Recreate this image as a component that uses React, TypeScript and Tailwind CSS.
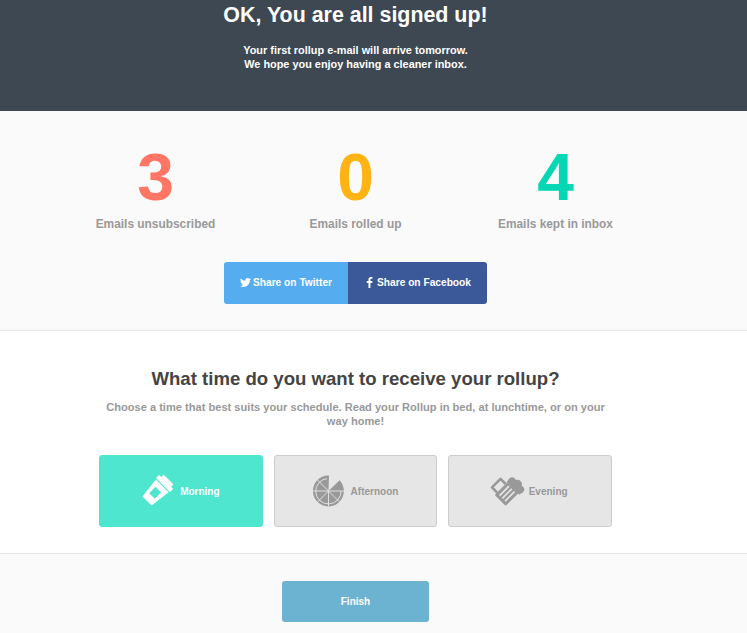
const font = "font-['Liberation_Sans',Arial,sans-serif]";

function Cup() {
  return (
    <svg width="32" height="32" viewBox="0 0 32 32" fill="#fff" className="shrink-0 overflow-visible">
      <g transform="translate(-2.500 1.500) rotate(45 16 16)">
        <rect x="9" y="-2.500" width="14" height="3.500" rx="1" />
        <rect x="6" y="1" width="20" height="4.500" rx="0.500" />
        <path fillRule="evenodd" d="M7 6.500h18L22.500 28h-13L7 6.500ZM12 12v9h8v-9h-8Z" />
      </g>
    </svg>
  );
}

function Pizza() {
  return (
    <svg width="31" height="32" viewBox="0 0 30 31" fill="#999" className="shrink-0">
      <path d="M15 15.500L15.500 0.500A15 15 0 1 0 25.800 5.200Z" />
      <g stroke="#e6e6e6" strokeWidth="0.9" fill="none">
        <path d="M13.500 3.500A12.300 12.300 0 1 0 27.200 15.500" />
        <path d="M15 15.500L15 30.500M15 15.500L0 15.500M15 15.500L4.500 5M15 15.500L25.500 26M15 15.500L4.500 26M15 15.500L30 15.500" />
      </g>
    </svg>
  );
}

function Beer() {
  return (
    <svg width="32" height="32" viewBox="0 0 32 32" fill="#999" className="shrink-0 overflow-visible">
      <g transform="translate(14.500 14.500) rotate(45) scale(0.86) translate(-14 -14)">
        <circle cx="11" cy="3.500" r="4.500" />
        <circle cx="18" cy="1.500" r="5.200" />
        <circle cx="24.500" cy="3.500" r="4.500" />
        <rect x="7" y="3" width="21" height="5.500" />
        <path fillRule="evenodd" d="M8 8h18v19.500a1.500 1.500 0 0 1-1.500 1.500h-15A1.500 1.500 0 0 1 8 27.500V8ZM11.500 10v15.500h2V10h-2ZM16 10v15.500h2V10H16ZM20.500 10v15.500h2V10h-2Z" />
        <path fillRule="evenodd" d="M-2 11a1.500 1.500 0 0 1 1.500-1.500h8.500v17h-8.500A1.500 1.500 0 0 1-2 25V11ZM1 12.500v11h7v-11H1Z" />
      </g>
    </svg>
  );
}

function Stat({ n, color, label }: { n: string; color: string; label: string }) {
  return (
    <div className="w-[200px] text-center">
      <div className={`pt-[2px] text-[66px] leading-[74px] font-bold ${color}`}>{n}</div>
      <div className="text-[11.9px] leading-[20px] font-bold text-[#999]">{label}</div>
    </div>
  );
}

function TimeCard({ active, icon, label, gap }: { active?: boolean; icon: React.ReactNode; label: string; gap: string }) {
  return (
    <div
      className={`flex h-[72px] w-[163.67px] items-center justify-center rounded-[3px] border text-[10px] font-bold ${gap} ${
        active ? "border-[#4ee6cf] bg-[#4ee6cf] text-white" : "border-[#ccc] bg-[#e6e6e6] text-[#999]"
      }`}
    >
      {icon}
      <span>{label}</span>
    </div>
  );
}

export default function App() {
  return (
    <div className={`${font} h-[633px] w-[747px] overflow-hidden bg-white`}>
      <header className="h-[111px] bg-[#3e4853] pr-[36px] text-center text-white">
        <h1 className="pt-[2px] text-[21.4px] leading-[26px] font-bold">OK, You are all signed up!</h1>
        <p className="mt-[15px] text-[10.9px] leading-[14px] font-bold">
          Your first rollup e-mail will arrive tomorrow.
          <br />
          We hope you enjoy having a cleaner inbox.
        </p>
      </header>

      <section className="h-[220px] border-b border-[#e5e5e5] bg-[#fafafa] pt-[27px] pr-[36px]">
        <div className="flex justify-center">
          <Stat n="3" color="text-[#ff7665]" label="Emails unsubscribed" />
          <Stat n="0" color="text-[#ffb414]" label="Emails rolled up" />
          <Stat n="4" color="text-[#05d6b4]" label="Emails kept in inbox" />
        </div>
        <div className="mt-[28px] flex justify-center text-[10.2px] font-bold text-white">
          <div className="flex h-[42px] w-[124px] items-center justify-center gap-[2px] rounded-l-[3px] bg-[#55acee]">
            <svg width="11" height="11" viewBox="0 0 24 24" fill="#fff" className="-mt-[1px]">
              <path d="M23.95 4.57a10 10 0 0 1-2.82.77 4.96 4.96 0 0 0 2.16-2.72c-.95.56-2 .96-3.12 1.19a4.92 4.92 0 0 0-8.38 4.48A13.98 13.98 0 0 1 1.67 3.15a4.92 4.92 0 0 0 1.52 6.57 4.9 4.9 0 0 1-2.23-.61v.06a4.92 4.92 0 0 0 3.95 4.82 5 5 0 0 1-2.21.08 4.94 4.94 0 0 0 4.6 3.42A9.87 9.87 0 0 1 0 19.54a13.94 13.94 0 0 0 7.55 2.21c9.06 0 14-7.5 14-13.98 0-.21 0-.42-.01-.63a10 10 0 0 0 2.46-2.55Z" />
            </svg>
            <span>Share on Twitter</span>
          </div>
          <div className="flex h-[42px] w-[139px] items-center justify-center gap-[2px] rounded-r-[3px] bg-[#3b5998]">
            <svg width="11" height="11" viewBox="0 0 24 24" fill="#fff" className="-mt-[1px]">
              <path d="M14 24V13h3.7l.6-4.3H14V6c0-1.2.4-2.1 2.1-2.1h2.3V.2C18 .1 16.700 0 15.200 0 11.900 0 9.700 2 9.700 5.600v3.100H6V13h3.700v11H14Z" />
            </svg>
            <span>Share on Facebook</span>
          </div>
        </div>
      </section>

      <section className="h-[223px] border-b border-[#e5e5e5] bg-white pt-[36px] pr-[36px]">
        <h2 className="text-center text-[18.6px] leading-[24px] font-bold text-[#444]">What time do you want to receive your rollup?</h2>
        <p className="mx-auto mt-[9px] w-[505px] text-center text-[11.1px] leading-[14px] font-bold text-[#999]">
          Choose a time that best suits your schedule. Read your Rollup in bed, at lunchtime, or on your way home!
        </p>
        <div className="mt-[27px] flex justify-center gap-[11px]">
          <TimeCard active gap="gap-[6px]" icon={<Cup />} label="Morning" />
          <TimeCard gap="gap-[7px]" icon={<Pizza />} label="Afternoon" />
          <TimeCard gap="gap-[4px]" icon={<Beer />} label="Evening" />
        </div>
      </section>

      <section className="h-[79px] bg-[#fafafa] pt-[27px] pr-[36px]">
        <div className="mx-auto flex h-[41px] w-[147px] items-center justify-center rounded-[3px] bg-[#6cb3d1] text-[10px] font-bold text-white">
          Finish
        </div>
      </section>
    </div>
  );
}
